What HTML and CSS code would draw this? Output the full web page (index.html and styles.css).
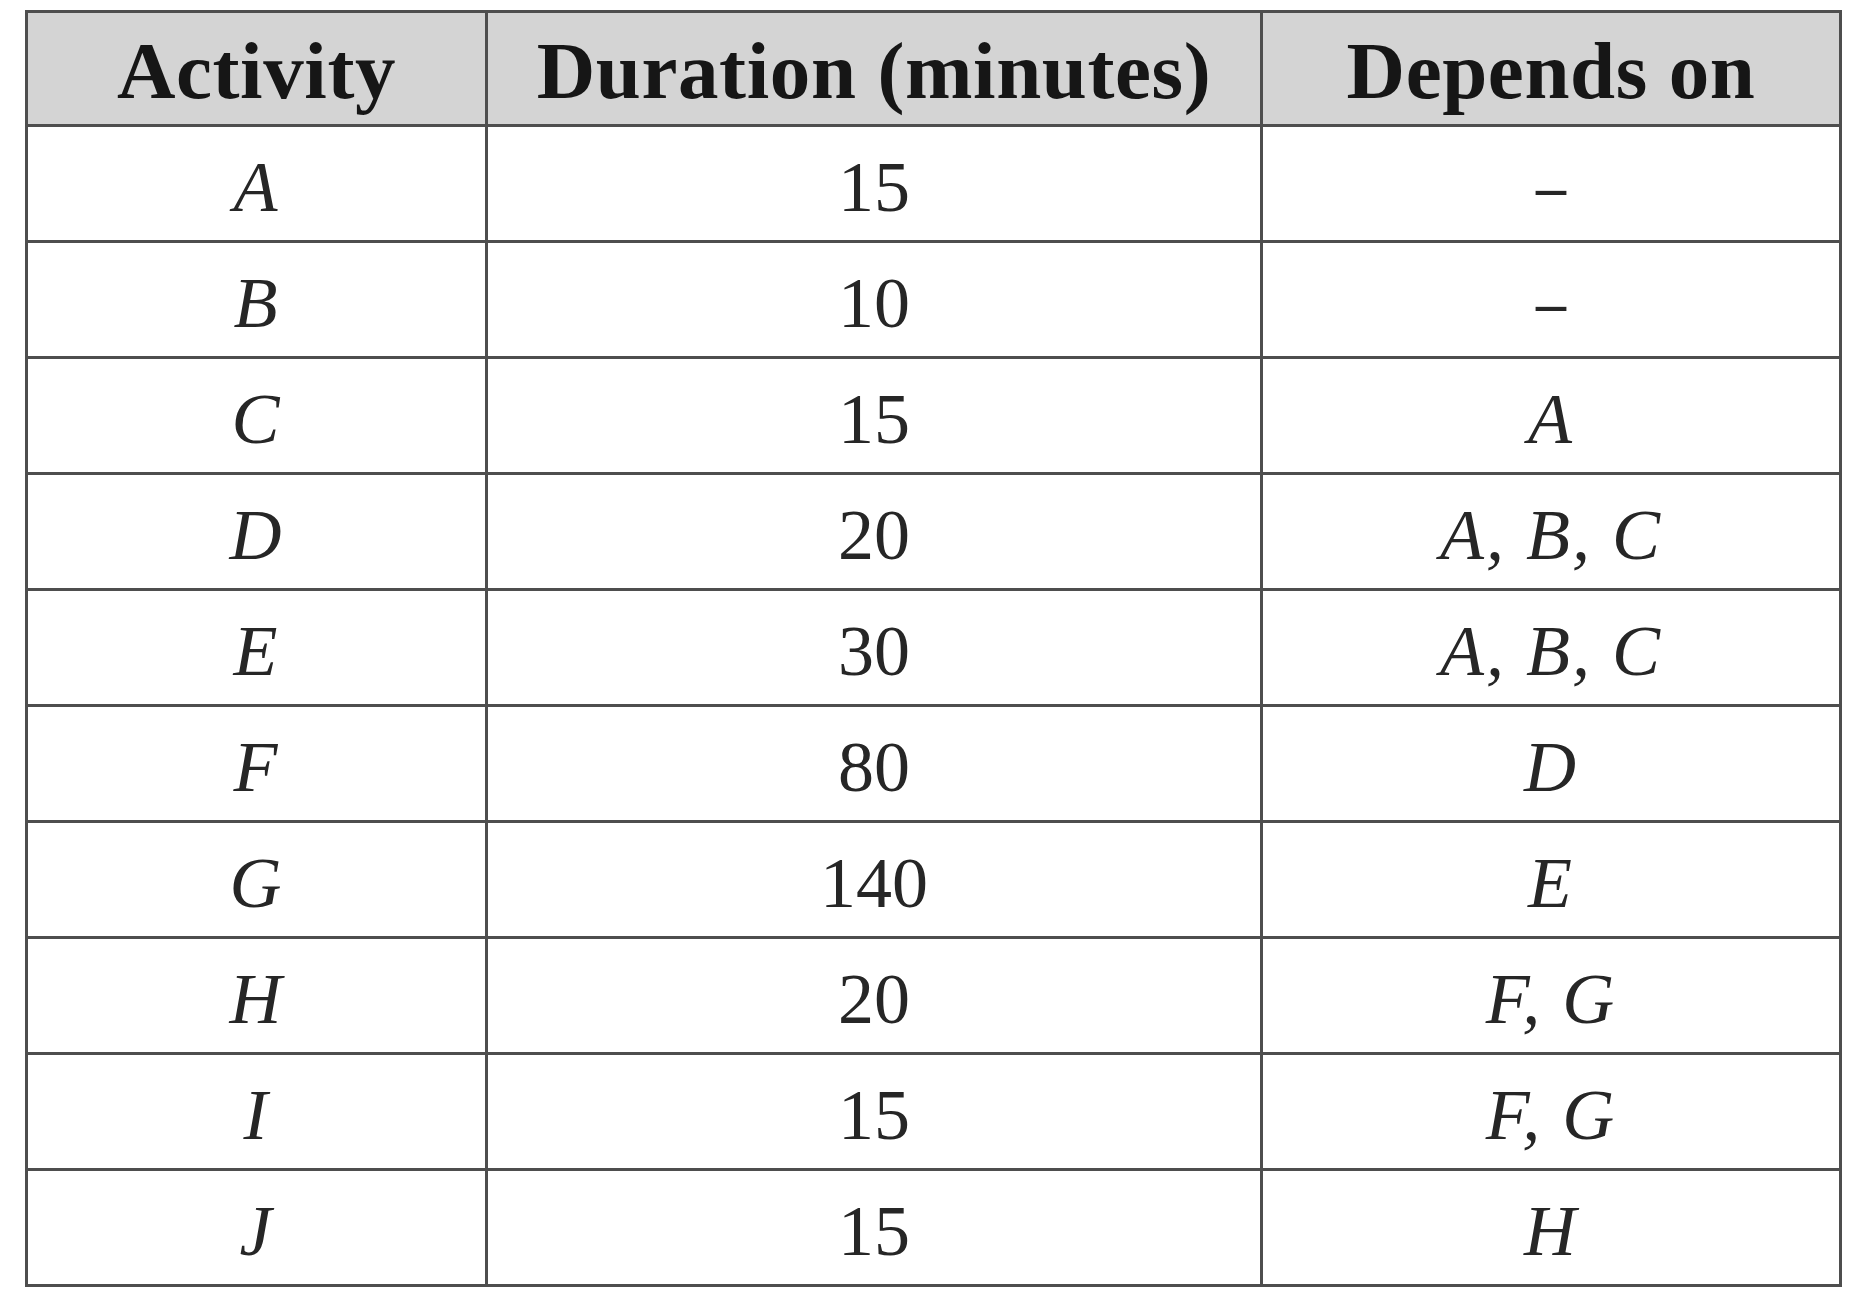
FILE: index.html
```html
<!DOCTYPE html>
<html>
<head>
<meta charset="utf-8">
<link rel="stylesheet" href="styles.css">
</head>
<body>
<div class="page">
<table class="grid">
  <colgroup>
    <col class="c1">
    <col class="c2">
    <col class="c3">
  </colgroup>
  <thead>
    <tr class="head">
      <th>Activity</th>
      <th>Duration (minutes)</th>
      <th>Depends on</th>
    </tr>
  </thead>
  <tbody>
    <tr><td class="it">A</td><td>15</td><td class="dash">–</td></tr>
    <tr><td class="it">B</td><td>10</td><td class="dash">–</td></tr>
    <tr><td class="it">C</td><td>15</td><td class="it">A</td></tr>
    <tr><td class="it">D</td><td>20</td><td class="it">A, B, C</td></tr>
    <tr><td class="it">E</td><td>30</td><td class="it">A, B, C</td></tr>
    <tr><td class="it">F</td><td>80</td><td class="it">D</td></tr>
    <tr><td class="it">G</td><td>140</td><td class="it">E</td></tr>
    <tr><td class="it">H</td><td>20</td><td class="it">F, G</td></tr>
    <tr><td class="it">I</td><td>15</td><td class="it">F, G</td></tr>
    <tr><td class="it">J</td><td>15</td><td class="it">H</td></tr>
  </tbody>
</table>
</div>
</body>
</html>
```
FILE: styles.css
```css
html, body {
  margin: 0;
  padding: 0;
  background: #ffffff;
}

.page {
  padding: 10px 0 0 25px;
}

.grid {
  border-collapse: collapse;
  table-layout: fixed;
  width: 1814px;
  font-family: "Liberation Serif", "DejaVu Serif", serif;
  color: #262626;
}

.c1 { width: 460px; }
.c2 { width: 775px; }
.c3 { width: 579px; }

.grid th,
.grid td {
  border: 3px solid #4e4e4e;
  text-align: center;
  vertical-align: middle;
  padding: 0;
}

.head {
  height: 114px;
  background: #d4d4d4;
}

.grid th {
  font-size: 81px;
  font-weight: bold;
  letter-spacing: 0.6px;
  color: #161616;
  padding-top: 6px;
}

.grid tbody tr {
  height: 116px;
}

.grid td {
  font-size: 72px;
  font-weight: normal;
  padding-top: 8px;
}

.grid td.it {
  font-style: italic;
  letter-spacing: 2px;
}

.grid td.dash {
  font-size: 60px;
  font-weight: bold;
}
```
